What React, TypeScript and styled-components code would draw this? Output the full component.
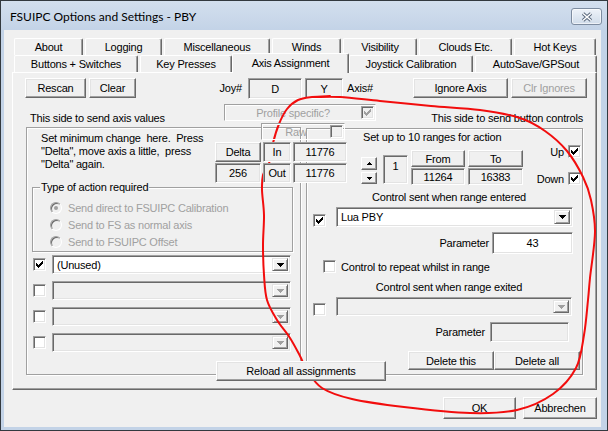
import React from "react"
import styled, { createGlobalStyle } from "styled-components"

const face = "#f0f0f0"
const light = "#e3e3e3"
const shadow = "#a0a0a0"
const dark = "#696969"
const greyText = "#a0a0a0"

const GlobalStyle = createGlobalStyle`
    html, body {
        margin: 0;
        padding: 0;
        background: #fff;
    }
    body {
        font-family: "Liberation Sans", Arial, sans-serif;
        font-size: 11px;
        letter-spacing: -0.2px;
        color: #000;
    }
`

const backTabs = [
    { label: "About", w: 69 },
    { label: "Logging", w: 77 },
    { label: "Miscellaneous", w: 106 },
    { label: "Winds", w: 69 },
    { label: "Visibility", w: 74 },
    { label: "Clouds Etc.", w: 93 },
    { label: "Hot Keys", w: 82 },
]

const frontTabs = [
    { label: "Buttons + Switches", w: 124 },
    { label: "Key Presses", w: 92 },
    { label: "Axis Assignment", w: 113, active: true },
    { label: "Joystick Calibration", w: 124 },
    { label: "AutoSave/GPSout", w: 122 },
]

// the hand drawn red loop, as points along the stroke
const loop: [number, number][] = [
    [330, 96], [312, 97], [298, 100], [287, 109], [279, 124], [273, 143],
    [270, 160], [267, 168], [263, 175], [262, 190], [264, 215], [263, 245],
    [264, 275], [267, 300], [277, 320], [290, 338], [300, 356], [307, 370],
    [322, 388], [352, 399], [404, 407], [470, 413], [517, 410], [553, 394],
    [576, 368], [584, 335], [588, 300], [590, 278], [595, 232], [591, 200],
    [583, 177], [567, 151], [545, 131], [520, 118], [480, 110], [431, 106],
    [380, 101], [340, 97], [316, 97],
]

const smoothPath = (pts: [number, number][]) => {
    let d = `M${pts[0][0]} ${pts[0][1]}`
    for (let i = 0; i < pts.length - 1; i++) {
        const p0 = pts[i - 1] || pts[i]
        const p1 = pts[i]
        const p2 = pts[i + 1]
        const p3 = pts[i + 2] || p2
        const c1x = p1[0] + (p2[0] - p0[0]) / 6
        const c1y = p1[1] + (p2[1] - p0[1]) / 6
        const c2x = p2[0] - (p3[0] - p1[0]) / 6
        const c2y = p2[1] - (p3[1] - p1[1]) / 6
        d += ` C${c1x} ${c1y} ${c2x} ${c2y} ${p2[0]} ${p2[1]}`
    }
    return d
}

const checkPixels = [
    [6, 0, 1], [5, 1, 2], [0, 2, 1], [4, 2, 3], [0, 3, 2], [3, 3, 3],
    [0, 4, 5], [1, 5, 3], [2, 6, 1],
]

const CheckMark = ({ color }: { color: string }) => (
    <svg width="7" height="7" viewBox="0 0 7 7" shapeRendering="crispEdges">
        {checkPixels.map(([x, y, w]) => (
            <rect key={`${x}-${y}`} x={x} y={y} width={w} height={1} fill={color} />
        ))}
    </svg>
)

const CheckBox = ({ checked, disabled }: { checked?: boolean; disabled?: boolean }) => (
    <CheckBoxBox $disabled={disabled}>
        {checked && <CheckMark color={disabled ? greyText : "#000"} />}
    </CheckBoxBox>
)

const DownArrow = ({ disabled }: { disabled?: boolean }) => (
    <svg width="7" height="4" viewBox="0 0 7 4" shapeRendering="crispEdges">
        <path d="M0 0h7v1h-1v1h-1v1h-1v1h-1v-1h-1v-1h-1v-1h-1z" fill={disabled ? greyText : "#000"} />
    </svg>
)

const UpArrow = () => (
    <svg width="5" height="3" viewBox="0 0 5 3" shapeRendering="crispEdges">
        <path d="M2 0h1v1h1v1h1v1h-5v-1h1v-1h1z" fill="#000" />
    </svg>
)

const SmallDown = () => (
    <svg width="5" height="3" viewBox="0 0 5 3" shapeRendering="crispEdges">
        <path d="M0 0h5v1h-1v1h-1v1h-1v-1h-1v-1h-1z" fill="#000" />
    </svg>
)

const Dropdown = ({ w, h, text, disabled }: { w: number; h: number; text?: string; disabled?: boolean }) => (
    <Combo $w={w} $h={h} $disabled={disabled}>
        <ComboText>{text}</ComboText>
        <ComboArrow>
            <DownArrow disabled={disabled} />
        </ComboArrow>
    </Combo>
)

const Radio = ({ selected }: { selected?: boolean }) => (
    <RadioCircle>{selected && <RadioDot />}</RadioCircle>
)

export default function App() {
    return (
        <>
            <GlobalStyle />
            <Screen>
                <Window>
                    <TitleBar>
                        <TitleText>FSUIPC Options and Settings - PBY</TitleText>
                        <CloseButton>
                            <svg width="12" height="10" viewBox="0 0 12 10">
                                <path d="M2 1.5L10 8.5M10 1.5L2 8.5" stroke="#56657a" strokeWidth="3.4" />
                                <path d="M2 1.5L10 8.5M10 1.5L2 8.5" stroke="#fff" strokeWidth="1.6" />
                            </svg>
                        </CloseButton>
                    </TitleBar>
                    <Client>
                        <TabStrip>
                            <TabRow>
                                {backTabs.map(t => (
                                    <Tab key={t.label} $w={t.w}>{t.label}</Tab>
                                ))}
                            </TabRow>
                            <TabRow>
                                {frontTabs.map(t => (
                                    <Tab key={t.label} $w={t.w} $active={t.active}>{t.label}</Tab>
                                ))}
                            </TabRow>
                        </TabStrip>
                        <Panel>
                            <TopRow>
                                <Button $w={61}>Rescan</Button>
                                <Button $w={47}>Clear</Button>
                                <FieldLabel $w={106} $right>Joy#</FieldLabel>
                                <Field $w={54} $h={21}>D</Field>
                                <Field $w={38} $h={21}>Y</Field>
                                <FieldLabel $w={64}>Axis#</FieldLabel>
                                <Button $w={95}>Ignore Axis</Button>
                                <Button $w={76} disabled>Clr Ignores</Button>
                            </TopRow>
                            <InfoRow>
                                <SideLabel $w={199}>This side to send axis values</SideLabel>
                                <DisabledFrame $w={152} $h={17}>
                                    <FrameText>Profile specific?</FrameText>
                                    <CheckBox checked disabled />
                                </DisabledFrame>
                                <SideLabel $right>This side to send button controls</SideLabel>
                            </InfoRow>
                            <GroupsRow>
                                <GroupBox $w={275} $h={248}>
                                    <AxisHeader>
                                        <Instructions>
                                            {"Set minimum change  here.  Press\n\"Delta\", move axis a little,  press\n\"Delta\" again."}
                                        </Instructions>
                                        <DeltaCluster>
                                            <DisabledFrame $w={84} $h={17} $ml={46}>
                                                <FrameText>Raw</FrameText>
                                                <CheckBox disabled />
                                            </DisabledFrame>
                                            <ClusterGrid>
                                                <Button $w={46}>Delta</Button>
                                                <Field $w={28} $h={20}>In</Field>
                                                <Field $w={54} $h={20}>11776</Field>
                                                <Field $w={46} $h={20}>256</Field>
                                                <Field $w={28} $h={20}>Out</Field>
                                                <Field $w={54} $h={20}>11776</Field>
                                            </ClusterGrid>
                                        </DeltaCluster>
                                    </AxisHeader>
                                    <TypeGroup>
                                        <GroupCaption>Type of action required</GroupCaption>
                                        <RadioList>
                                            <RadioRow>
                                                <Radio selected />
                                                Send direct to FSUIPC Calibration
                                            </RadioRow>
                                            <RadioRow>
                                                <Radio />
                                                Send to FS as normal axis
                                            </RadioRow>
                                            <RadioRow>
                                                <Radio />
                                                Send to FSUIPC Offset
                                            </RadioRow>
                                        </RadioList>
                                    </TypeGroup>
                                    <ActionList>
                                        <ActionRow>
                                            <CheckBox checked />
                                            <Dropdown w={239} h={19} text="(Unused)" />
                                        </ActionRow>
                                        {[1, 2, 3].map(i => (
                                            <ActionRow key={i}>
                                                <CheckBox />
                                                <Dropdown w={239} h={19} disabled />
                                            </ActionRow>
                                        ))}
                                    </ActionList>
                                </GroupBox>
                                <GroupBox $w={277} $h={247} $top={1} $pad="2px 1px 0 6px">
                                    <RangeArea>
                                        <RangeLeft>
                                            <RangeTitle>Set up to 10 ranges for action</RangeTitle>
                                            <RangeControls>
                                                <Spinner>
                                                    <SpinButton $h={13}><UpArrow /></SpinButton>
                                                    <SpinButton $h={12}><SmallDown /></SpinButton>
                                                </Spinner>
                                                <IndexBox>1</IndexBox>
                                                <RangeColumn>
                                                    <Button $w={54} $h={17}>From</Button>
                                                    <Field $w={54} $h={17}>11264</Field>
                                                </RangeColumn>
                                                <RangeColumn>
                                                    <Button $w={55} $h={17}>To</Button>
                                                    <Field $w={55} $h={17}>16383</Field>
                                                </RangeColumn>
                                            </RangeControls>
                                        </RangeLeft>
                                        <UpDownColumn>
                                            <UpDownRow>
                                                Up
                                                <CheckBox checked />
                                            </UpDownRow>
                                            <UpDownRow>
                                                Down
                                                <CheckBox checked />
                                            </UpDownRow>
                                        </UpDownColumn>
                                    </RangeArea>
                                    <CenterCaption $top={6}>Control sent when range entered</CenterCaption>
                                    <ControlRow $top={3}>
                                        <CheckBox checked />
                                        <Dropdown w={237} h={20} text="Lua PBY" />
                                    </ControlRow>
                                    <ParamRow $top={5} $right={8} $gap={3}>
                                        Parameter
                                        <ParamInput $w={81} $h={22}>43</ParamInput>
                                    </ParamRow>
                                    <RepeatRow>
                                        <CheckBox />
                                        Control to repeat whilst in range
                                    </RepeatRow>
                                    <CenterCaption $top={8}>Control sent when range exited</CenterCaption>
                                    <ControlRow $top={3}>
                                        <CheckBox />
                                        <Dropdown w={236} h={19} disabled />
                                    </ControlRow>
                                    <ParamRow $top={6} $right={12} $gap={5}>
                                        Parameter
                                        <ParamInput $w={79} $h={20} $disabled />
                                    </ParamRow>
                                    <DeleteRow>
                                        <Button $w={86} $h={19}>Delete this</Button>
                                        <Button $w={86} $h={19}>Delete all</Button>
                                    </DeleteRow>
                                </GroupBox>
                            </GroupsRow>
                            <ReloadButton $w={170}>Reload all assignments</ReloadButton>
                        </Panel>
                        <Footer>
                            <Button $w={73} $h={22}>OK</Button>
                            <Button $w={74} $h={22}>Abbrechen</Button>
                        </Footer>
                    </Client>
                </Window>
                <Scribble width="608" height="431" viewBox="0 0 608 431">
                    <path d={smoothPath(loop)} fill="none" stroke="#f20d0d" strokeWidth="2" strokeLinecap="round" />
                </Scribble>
            </Screen>
        </>
    )
}

const Screen = styled.div`
    position: relative;
    width: 608px;
    height: 431px;
    overflow: hidden;
`

const Window = styled.div`
    box-sizing: border-box;
    width: 608px;
    height: 431px;
    border: 1px solid #33393f;
    background: #c3d3e7;
    display: flex;
    flex-direction: column;
`

const TitleBar = styled.div`
    flex: none;
    height: 29px;
    display: flex;
    align-items: flex-start;
    padding: 0 5px 0 9px;
    background: linear-gradient(#d3dfee, #c3d3e7);
`

const TitleText = styled.div`
    flex: 1;
    padding-top: 8px;
    font-family: Lato, "Liberation Sans", sans-serif;
    font-size: 12px;
    letter-spacing: 0;
    color: #000;
`

const CloseButton = styled.div`
    box-sizing: border-box;
    flex: none;
    width: 31px;
    height: 17px;
    margin-top: 7px;
    display: flex;
    align-items: center;
    justify-content: center;
    border: 1px solid #7d8ca0;
    border-radius: 3px;
    background: linear-gradient(#eef3f9, #d0dcea);
    box-shadow: inset 0 0 0 1px rgba(255, 255, 255, 0.6);
`

const Client = styled.div`
    flex: 1;
    margin: 0 6px 3px 3px;
    padding: 8px 4px 0 8px;
    background: ${face};
    display: flex;
    flex-direction: column;
`

const TabStrip = styled.div`
    display: flex;
    flex-direction: column;
    margin-left: 2px;
`

const TabRow = styled.div`
    display: flex;
    gap: 2px;
    height: 17px;
`

const Tab = styled.div<{ $w: number; $active?: boolean }>`
    box-sizing: border-box;
    flex: none;
    width: ${p => (p.$active ? p.$w + 4 : p.$w)}px;
    height: ${p => (p.$active ? 20 : 17)}px;
    margin: ${p => (p.$active ? "-2px -2px -1px" : "0")};
    z-index: ${p => (p.$active ? 1 : 0)};
    display: flex;
    align-items: center;
    justify-content: center;
    padding-bottom: ${p => (p.$active ? 2 : 0)}px;
    background: ${face};
    border: 1px solid #fff;
    border-right-color: ${dark};
    border-bottom: none;
    border-radius: 2px 2px 0 0;
    box-shadow: inset -1px 0 ${shadow};
    white-space: nowrap;
`

const Panel = styled.div`
    box-sizing: border-box;
    flex: none;
    height: 318px;
    display: flex;
    flex-direction: column;
    padding: 5px 9px 0 12px;
    border: 1px solid;
    border-color: #fff ${dark} ${dark} #fff;
    box-shadow: inset -1px -1px ${shadow};
`

const Button = styled.button<{ $w: number; $h?: number }>`
    box-sizing: border-box;
    flex: none;
    width: ${p => p.$w}px;
    height: ${p => p.$h ?? 20}px;
    padding: 0;
    font: inherit;
    letter-spacing: inherit;
    color: ${p => (p.disabled ? greyText : "#000")};
    background: ${face};
    border: 1px solid;
    border-color: #fff ${dark} ${dark} #fff;
    box-shadow: inset -1px -1px ${shadow}, inset 1px 1px ${light};
    white-space: nowrap;
`

const ReloadButton = styled(Button)`
    margin: -14px 0 0 191px;
    z-index: 1;
`

const Field = styled.div<{ $w: number; $h: number }>`
    box-sizing: border-box;
    flex: none;
    width: ${p => p.$w}px;
    height: ${p => p.$h}px;
    display: flex;
    align-items: center;
    justify-content: center;
    background: ${face};
    border: 1px solid;
    border-color: ${shadow} #fff #fff ${shadow};
    box-shadow: inset 1px 1px ${dark}, inset -1px -1px ${light};
`

const TopRow = styled.div`
    display: flex;
    align-items: flex-start;
    gap: 3px;
`

const FieldLabel = styled.div<{ $w: number; $right?: boolean }>`
    flex: none;
    width: ${p => p.$w}px;
    box-sizing: border-box;
    padding: ${p => (p.$right ? "0 3px 0 0" : "0 0 0 1px")};
    text-align: ${p => (p.$right ? "right" : "left")};
    line-height: 21px;
`

const InfoRow = styled.div`
    display: flex;
    align-items: flex-start;
    height: 21px;
    margin-top: 5px;
`

const SideLabel = styled.div<{ $w?: number; $right?: boolean }>`
    box-sizing: border-box;
    flex: ${p => (p.$w ? "none" : "1")};
    width: ${p => (p.$w ? `${p.$w}px` : "auto")};
    padding: ${p => (p.$right ? "8px 4px 0 0" : "8px 0 0 5px")};
    text-align: ${p => (p.$right ? "right" : "left")};
    line-height: 13px;
    white-space: nowrap;
`

const DisabledFrame = styled.div<{ $w: number; $h: number; $ml?: number }>`
    box-sizing: border-box;
    flex: none;
    width: ${p => p.$w}px;
    height: ${p => p.$h}px;
    margin-left: ${p => p.$ml ?? 0}px;
    display: flex;
    align-items: center;
    padding-right: 1px;
    border: 1px solid;
    border-color: ${shadow} #fff #fff ${shadow};
    box-shadow: inset 1px 1px #fff;
    color: ${greyText};
`

const FrameText = styled.span`
    flex: 1;
    text-align: center;
    white-space: nowrap;
`

const GroupsRow = styled.div`
    display: flex;
    align-items: flex-start;
    gap: 5px;
    margin: 2px 0 0 1px;
`

const GroupBox = styled.div<{ $w: number; $h: number; $top?: number; $pad?: string }>`
    box-sizing: border-box;
    flex: none;
    width: ${p => p.$w}px;
    height: ${p => p.$h}px;
    margin-top: ${p => p.$top ?? 0}px;
    padding: ${p => p.$pad ?? "0"};
    display: flex;
    flex-direction: column;
    border: 1px solid ${shadow};
    box-shadow: inset 1px 1px #fff, 1px 1px #fff;
`

const AxisHeader = styled.div`
    display: flex;
    align-items: flex-start;
    padding-left: 14px;
`

const Instructions = styled.div`
    flex: none;
    width: 174px;
    padding-top: 4px;
    line-height: 13px;
    white-space: pre;
`

const DeltaCluster = styled.div`
    flex: none;
    width: 132px;
    margin: -5px -47px 0 0;
    z-index: 1;
    display: flex;
    flex-direction: column;
    gap: 2px;
`

const ClusterGrid = styled.div`
    display: grid;
    grid-template-columns: 46px 28px 54px;
    grid-auto-rows: 20px;
    column-gap: 2px;
    row-gap: 1px;
`

const TypeGroup = styled.div`
    display: flex;
    flex-direction: column;
    margin: 4px 7px 0 5px;
    padding: 0 0 3px 7px;
    border: 1px solid ${shadow};
    box-shadow: inset 1px 1px #fff, 1px 1px #fff;
`

const GroupCaption = styled.div`
    align-self: flex-start;
    margin-top: -7px;
    padding: 0 1px;
    line-height: 13px;
    background: ${face};
`

const RadioList = styled.div`
    display: flex;
    flex-direction: column;
    gap: 4px;
    margin: 7px 0 0 10px;
`

const RadioRow = styled.div`
    display: flex;
    align-items: center;
    gap: 6px;
    height: 13px;
    color: ${greyText};
    white-space: nowrap;
`

const RadioCircle = styled.span`
    box-sizing: border-box;
    flex: none;
    width: 12px;
    height: 12px;
    display: flex;
    align-items: center;
    justify-content: center;
    border-radius: 50%;
    border: 1px solid;
    border-color: ${shadow} #fff #fff ${shadow};
    box-shadow: inset 1px 1px ${dark};
    background: ${face};
`

const RadioDot = styled.span`
    width: 4px;
    height: 4px;
    border-radius: 50%;
    background: ${greyText};
`

const ActionList = styled.div`
    display: flex;
    flex-direction: column;
    gap: 7px;
    margin-top: 3px;
    padding-left: 6px;
`

const ActionRow = styled.div`
    display: flex;
    align-items: center;
    gap: 6px;
`

const CheckBoxBox = styled.span<{ $disabled?: boolean }>`
    box-sizing: border-box;
    flex: none;
    width: 13px;
    height: 13px;
    display: inline-flex;
    align-items: center;
    justify-content: center;
    background: ${p => (p.$disabled ? face : "#fff")};
    border: 1px solid;
    border-color: ${shadow} #fff #fff ${shadow};
    box-shadow: inset 1px 1px ${dark}, inset -1px -1px ${light};
`

const Combo = styled.div<{ $w: number; $h: number; $disabled?: boolean }>`
    box-sizing: border-box;
    flex: none;
    width: ${p => p.$w}px;
    height: ${p => p.$h}px;
    display: flex;
    align-items: center;
    padding: 2px;
    background: ${p => (p.$disabled ? face : "#fff")};
    border: 1px solid;
    border-color: ${shadow} #fff #fff ${shadow};
    box-shadow: inset 1px 1px ${dark}, inset -1px -1px ${light};
`

const ComboText = styled.span`
    flex: 1;
    padding-left: 2px;
    white-space: nowrap;
`

const ComboArrow = styled.span`
    box-sizing: border-box;
    flex: none;
    width: 16px;
    align-self: stretch;
    display: flex;
    align-items: center;
    justify-content: center;
    background: ${face};
    border: 1px solid;
    border-color: ${light} ${dark} ${dark} ${light};
    box-shadow: inset 1px 1px #fff, inset -1px -1px ${shadow};
`

const RangeArea = styled.div`
    display: flex;
    align-items: flex-start;
`

const RangeLeft = styled.div`
    display: flex;
    flex-direction: column;
    padding-left: 48px;
`

const RangeTitle = styled.div`
    margin-left: 2px;
    line-height: 13px;
    white-space: nowrap;
`

const RangeControls = styled.div`
    display: flex;
    align-items: flex-start;
    margin-top: 6px;
`

const Spinner = styled.div`
    display: flex;
    flex-direction: column;
    gap: 2px;
    margin: 7px 6px 0 0;
`

const SpinButton = styled.div<{ $h: number }>`
    box-sizing: border-box;
    width: 16px;
    height: ${p => p.$h}px;
    display: flex;
    align-items: center;
    justify-content: center;
    background: ${face};
    border: 1px solid;
    border-color: #fff ${dark} ${dark} #fff;
    box-shadow: inset -1px -1px ${shadow};
`

const IndexBox = styled(Field).attrs({ $w: 25, $h: 29 })`
    align-items: flex-start;
    padding-top: 4px;
    margin: 5px 3px 0 0;
`

const RangeColumn = styled.div`
    display: flex;
    flex-direction: column;
    gap: 1px;
    margin-right: 3px;
`

const UpDownColumn = styled.div`
    display: flex;
    flex-direction: column;
    align-items: flex-end;
    margin-left: auto;
`

const UpDownRow = styled.div`
    display: flex;
    align-items: center;
    gap: 4px;
    height: 13px;
    margin-top: 14px;
`

const CenterCaption = styled.div<{ $top: number }>`
    margin-top: ${p => p.$top}px;
    padding-left: 4px;
    text-align: center;
    line-height: 13px;
`

const ControlRow = styled.div<{ $top: number }>`
    display: flex;
    align-items: flex-end;
    gap: 10px;
    margin-top: ${p => p.$top}px;
`

const ParamRow = styled.div<{ $top: number; $right: number; $gap: number }>`
    display: flex;
    align-items: center;
    justify-content: flex-end;
    gap: ${p => p.$gap}px;
    margin-top: ${p => p.$top}px;
    padding-right: ${p => p.$right}px;
`

const ParamInput = styled.div<{ $w: number; $h: number; $disabled?: boolean }>`
    box-sizing: border-box;
    flex: none;
    width: ${p => p.$w}px;
    height: ${p => p.$h}px;
    display: flex;
    align-items: center;
    justify-content: center;
    background: ${p => (p.$disabled ? face : "#fff")};
    border: 1px solid;
    border-color: ${shadow} #fff #fff ${shadow};
    box-shadow: inset 1px 1px ${dark}, inset -1px -1px ${light};
`

const RepeatRow = styled.div`
    display: flex;
    align-items: center;
    gap: 5px;
    height: 13px;
    margin-top: 6px;
    padding-left: 10px;
    white-space: nowrap;
`

const DeleteRow = styled.div`
    display: flex;
    justify-content: flex-end;
    margin-top: 9px;
    padding-right: 1px;
`

const Footer = styled.div`
    display: flex;
    justify-content: flex-end;
    gap: 7px;
    margin-top: 7px;
`

const Scribble = styled.svg`
    position: absolute;
    left: 0;
    top: 0;
    pointer-events: none;
`
